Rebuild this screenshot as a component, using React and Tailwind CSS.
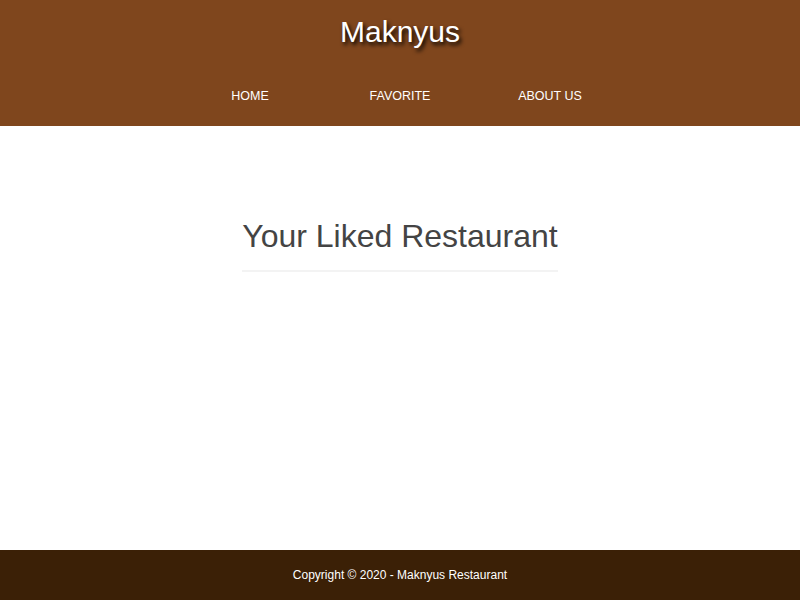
export default function App() {
  const links = ['HOME', 'FAVORITE', 'ABOUT US'];
  return (
    <div className="flex min-h-screen flex-col font-['Liberation_Sans',Arial,sans-serif]">
      <header className="h-[126px] bg-[#7f461d] text-white">
        <h1 className="pt-[14px] text-center text-[30px] leading-[36px] [text-shadow:2px_3px_4px_#000]">
          Maknyus
        </h1>
        <nav className="mt-[38px] flex justify-center">
          {links.map((l) => (
            <a key={l} href="#" className="w-[150px] text-center text-[12.5px] leading-[16px]">
              {l}
            </a>
          ))}
        </nav>
      </header>

      <main className="flex flex-1 justify-center pt-[92px]">
        <div>
          <h2 className="border-b-2 border-[#f3f3f3] pb-[16px] text-[32px] leading-[36px] text-[#444]">
            Your Liked Restaurant
          </h2>
        </div>
      </main>

      <footer className="flex h-[50px] items-center justify-center bg-[#3b2006] text-[12px] text-white">
        Copyright © 2020 - Maknyus Restaurant
      </footer>
    </div>
  );
}
